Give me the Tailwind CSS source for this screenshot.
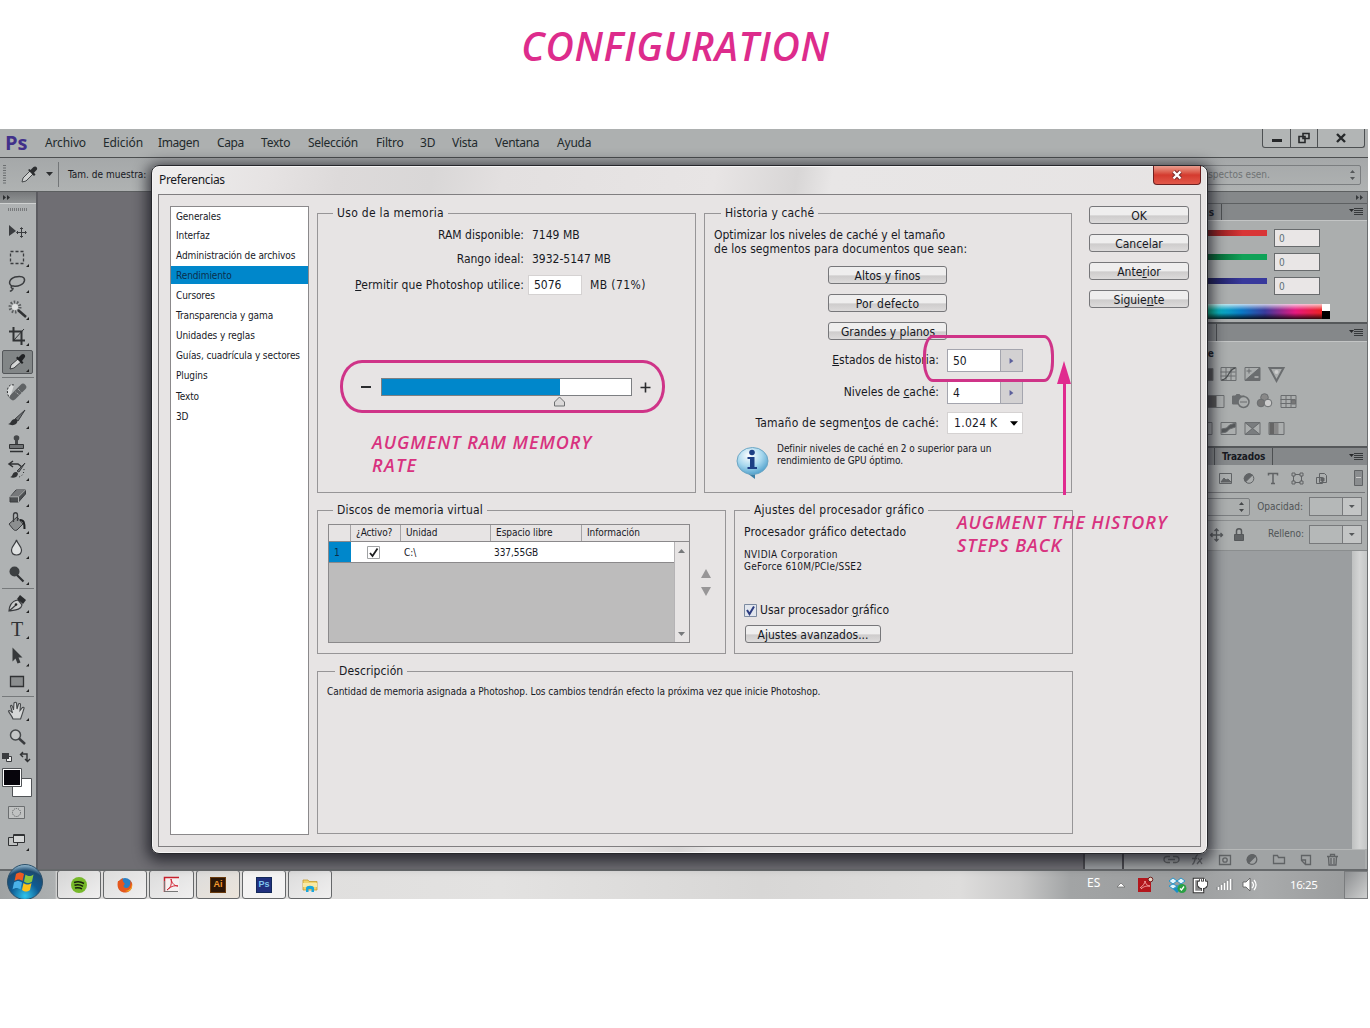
<!DOCTYPE html>
<html lang="es">
<head>
<meta charset="utf-8">
<title>Configuration</title>
<script src="https://cdn.jsdelivr.net/npm/@tailwindcss/browser@4"></script>
</head>
<body class="relative h-[1028px] w-[1370px] overflow-hidden bg-white font-['DejaVu_Sans_Condensed','DejaVu_Sans',sans-serif] text-[#17191f]">

<h1 class="flex h-[129px] w-[1351px] justify-center pt-[19px] font-['Open_Sans',sans-serif] text-[39px] leading-[54px] font-semibold tracking-[0.7px] text-[#dd2c8c] italic">CONFIGURATION</h1>

<!-- application window -->
<div class="flex h-[770px] w-[1368px] flex-col overflow-hidden bg-[#adb0b0]">
  <!-- menu bar -->
  <div class="flex h-[29px] shrink-0 justify-between border-b border-[#4c4f50] bg-[#adb0b0]">
    <nav class="flex items-center font-['Noto_Sans',sans-serif] text-[12px] text-[#222a2c]">
      <span class="w-[45px] pl-[5px] font-['Open_Sans',sans-serif] text-[20px] leading-none font-bold text-[#41308a]">Ps</span>
      <span class="w-[58px] tracking-[-0.15px]">Archivo</span><span class="w-[55px] tracking-[-0.1px]">Edición</span><span class="w-[59px] tracking-[-0.4px]">Imagen</span><span class="w-[44px] tracking-[-0.4px]">Capa</span><span class="w-[47px] tracking-[-0.2px]">Texto</span><span class="w-[68px] tracking-[-0.3px]">Selección</span><span class="w-[44px] tracking-[-0.2px]">Filtro</span><span class="w-[32px]">3D</span><span class="w-[43px] tracking-[-0.3px]">Vista</span><span class="w-[62px] tracking-[-0.3px]">Ventana</span><span class="tracking-[-0.2px]">Ayuda</span>
    </nav>
    <div class="mr-[3px] flex h-[19px] w-[103px] rounded-b-[3px] border border-t-0 border-[#4d5052] bg-[#b2b5b5]">
      <svg class="h-full w-full" viewBox="0 0 101 18"><path d="M27.500 0V18M54.500 0V18" stroke="#4d5052"/><path d="M9 11.500H19" stroke="#26282a" stroke-width="3"/><path d="M36 7.500h6v6h-6zM40 4.500h6v5h-6z" fill="none" stroke="#26282a" stroke-width="1.600"/><path d="M74 5l8 8M82 5l-8 8" stroke="#26282a" stroke-width="2.400"/></svg>
    </div>
  </div>
  <!-- options bar -->
  <div class="flex h-[34px] shrink-0 items-center justify-between border-b border-[#5c5f60] bg-gradient-to-b from-[#a5a8a9] to-[#afb2b2]">
    <div class="flex items-center">
      <svg class="h-8 w-[68px]" viewBox="0 0 68 32"><path d="M4.500 6V26" stroke="#6b6e70" stroke-width="3" stroke-dasharray="1 1.500"/><path d="M22 23l1-4 8-8 3 3-8 8z" fill="#d0d2d2" stroke="#45484a"/><path d="M28 11l6 6 1.500-1.500-1.500-1.800 3-3.200c1-2-1.500-4-3.500-2.500l-3 3-1-1z" fill="#2c2e30"/><path d="M46 13h7l-3.500 4z" fill="#2c2e30"/><path d="M58.500 3V28" stroke="#737678"/></svg>
      <span class="text-[10px]">Tam. de muestra:</span>
    </div>
    <div class="mr-[7px] flex h-[20px] w-[200px] items-center justify-between rounded-[2px] border border-[#7b7e80] pr-[3px] pl-[40px] text-[10px] text-[#6f7374]"><span>Aspectos esen.</span><svg class="h-3 w-[9px]" viewBox="0 0 9 12"><path d="M4.500 1L2 4h5zM4.500 11L2 8h5z" fill="#55585a"/></svg></div>
  </div>

  <!-- workspace -->
  <div class="flex h-[677px] shrink-0 bg-[#6f6e73]">
    <!-- tools -->
    <div class="flex w-[38px] shrink-0 flex-col border-r-2 border-[#5b5b60] bg-[#afb2b3]">
      <svg class="h-[26px] w-9 shrink-0" viewBox="0 0 36 26"><defs><linearGradient id="hd" x2="0" y2="1"><stop stop-color="#77797b"/><stop offset="1" stop-color="#909394"/></linearGradient></defs><path fill="url(#hd)" d="M0 0h36v11H0z"/><path d="M0 11.500h36" stroke="#d0d2d2"/><path d="M3 3l3 2.500-3 2.500zM7 3l3 2.500-3 2.500z" fill="#2c2e30"/><path d="M8 17.500h20" stroke="#77797b" stroke-width="3" stroke-dasharray="1 1"/></svg>
      <svg class="h-[26px] w-9 shrink-0" viewBox="0 0 36 26"><path d="M9 7v11l7-5z" fill="#3a3c3f"/><path d="M21.500 10v9M17 14.500h9M20 11l1.500-1.500 1.500 1.500M20 18l1.500 1.500 1.500-1.500M18 13l-1.500 1.500L18 16M25 13l1.500 1.500L25 16" fill="none" stroke="#3a3c3f"/></svg>
      <svg class="h-[26px] w-9 shrink-0" viewBox="0 0 36 26"><path d="M10.500 7.500h13v12h-13z" fill="none" stroke="#3a3c3f" stroke-width="1.300" stroke-dasharray="3 2"/><path d="M29 20v3h-3z" fill="#222"/></svg>
      <svg class="h-[26px] w-9 shrink-0" viewBox="0 0 36 26"><path d="M12 16c-4-2-3-7 3-9 6-1.500 10 0 9.500 3.500-.5 4-7 6.500-11 5.500-3-.5-3 2.500-.5 2.500 0 2-2 2-3 3" fill="none" stroke="#3a3c3f" stroke-width="1.500"/><path d="M29 20v3h-3z" fill="#222"/></svg>
      <svg class="h-[26px] w-9 shrink-0" viewBox="0 0 36 26"><circle cx="15" cy="11" r="5" fill="none" stroke="#5a5d5f" stroke-width="3" stroke-dasharray="1.500 1.600"/><circle cx="15" cy="11" r="3" fill="#e0e2e2"/><path d="M18 14l8 7" stroke="#303234" stroke-width="2.500"/><path d="M29 21v3h-3z" fill="#222"/></svg>
      <svg class="h-[26px] w-9 shrink-0" viewBox="0 0 36 26"><path d="M9 9.500h12.500V23M13.500 5v13.500H25" fill="none" stroke="#303234" stroke-width="2"/><path d="M14 18L24 7" stroke="#303234"/><path d="M29 21v3h-3z" fill="#222"/></svg>
      <svg class="h-[26px] w-9 shrink-0" viewBox="0 0 36 26"><rect x="2.500" y="2.500" width="30" height="23" rx="1.500" fill="#828687" stroke="#54575a"/><path d="M10 21l1-4 8-7 3 3-8 7z" fill="#d5d7d7" stroke="#3a3c3f"/><path d="M16 10l6 6 1.500-1.500L22 13l3-4c1-2-1.500-4-3.500-2.500l-3 3-1-1z" fill="#202224"/><path d="M29 21v3h-3z" fill="#222"/></svg>
      <div class="mx-0.5 mt-[3px] mb-px h-px shrink-0 bg-[#76797b]"></div>
      <svg class="h-[26px] w-9 shrink-0" viewBox="0 0 36 26"><path d="M14 6c-8-2-8 10-4 13" fill="#d9dbdb" stroke="#303234" stroke-dasharray="2 1.500"/><path d="M13 18L23 8" stroke="#5f6264" stroke-width="6.500" stroke-linecap="round"/><path d="M15.500 13l5 4M18 10l4 4" stroke="#babcbc" stroke-dasharray="1 1"/><path d="M29 21v3h-3z" fill="#222"/></svg>
      <svg class="h-[26px] w-9 shrink-0" viewBox="0 0 36 26"><path d="M25 5L15 14l3 2z" fill="#707375" stroke="#3a3c3f"/><path d="M8 19c3 0 3-5 7-5 3 0 3 3 1 5-2 1.500-5 1.500-8 0z" fill="#303234"/><path d="M29 21v3h-3z" fill="#222"/></svg>
      <svg class="h-[26px] w-9 shrink-0" viewBox="0 0 36 26"><circle cx="16.500" cy="7" r="2.800" fill="#45484a"/><path d="M15 9h3v5h-3z" fill="#45484a"/><path d="M9.500 13.500h14v4h-14z" fill="#707375" stroke="#303234"/><path d="M10 20.500h13" stroke="#303234" stroke-width="1.500"/><path d="M29 21v3h-3z" fill="#222"/></svg>
      <svg class="h-[26px] w-9 shrink-0" viewBox="0 0 36 26"><path d="M10 7h8l4 3M13 4L9 7l4 3" fill="none" stroke="#303234" stroke-width="1.500"/><path d="M25 6l-8 8 2 1z" fill="#707375" stroke="#3a3c3f"/><path d="M10 20c3 0 2-5 6-5 3 0 2 4 0 5-2 1-4 1-6 0z" fill="#303234"/><path d="M24 12c0 5-2 7-5 8" fill="none" stroke="#303234" stroke-dasharray="1 2"/><path d="M29 21v3h-3z" fill="#222"/></svg>
      <svg class="h-[26px] w-9 shrink-0" viewBox="0 0 36 26"><path d="M10 14l6-7h9.500v4l-7 8H10z" fill="#4c4f51" stroke="#3a3c3f"/><path d="M10.500 13.500h8l6-6.500h-8z" fill="#77797b"/><path d="M10 13.800h8.500l7-7M18.500 14v5" fill="none" stroke="#b0b2b2"/><path d="M29 21v3h-3z" fill="#222"/></svg>
      <svg class="h-[26px] w-9 shrink-0" viewBox="0 0 36 26"><path d="M9 15l8-7 6 7-6 6c-2 1-3 0-4-1z" fill="#8c8f90" stroke="#3a3c3f"/><path d="M13.500 13V6c0-3 4-3 4 0v6" fill="none" stroke="#3a3c3f" stroke-width="1.300"/><path d="M20 11c4 0 4.500 3 4.500 9" fill="none" stroke="#202224" stroke-width="2"/><path d="M29 22v3h-3z" fill="#222"/></svg>
      <svg class="h-[26px] w-9 shrink-0" viewBox="0 0 36 26"><path d="M16.500 5c1 4 5 6 5 10s-2.500 5-5 5-5-1-5-5 4-6 5-10z" fill="#dfe1e1" stroke="#3a3c3f" stroke-width="1.200"/><path d="M29 21v3h-3z" fill="#222"/></svg>
      <svg class="h-[26px] w-9 shrink-0" viewBox="0 0 36 26"><circle cx="14.500" cy="10.500" r="5" fill="#3c3f41"/><path d="M17 14l6.500 6.500" stroke="#303234" stroke-width="2.200"/><path d="M29 21v3h-3z" fill="#222"/></svg>
      <div class="mx-0.5 mt-px mb-px h-px shrink-0 bg-[#76797b]"></div>
      <svg class="h-[26px] w-9 shrink-0" viewBox="0 0 36 26"><path d="M9 21c0-4 2-10 9-11l4 5c-1 5-7 5-13 6zl7-6" fill="#c9cbcb" stroke="#3a3c3f" stroke-width="1.200"/><circle cx="16" cy="14.500" r="1.300" fill="#222"/><path d="M20 5l6 5-3 4-6-5z" fill="#2a2c2e"/><path d="M29 20v3h-3z" fill="#222"/></svg>
      <div class="flex h-[26px] shrink-0 items-center pl-[11px]"><span class="font-['Liberation_Serif',serif] text-[20px] leading-none text-[#2f3234]">T</span><svg class="h-[26px] w-3" viewBox="0 0 12 26"><path d="M6 20v3H3z" fill="#222"/></svg></div>
      <svg class="h-[27px] w-9 shrink-0" viewBox="0 0 36 26"><path d="M12.500 5v14l3-3 2 5 3-1-2-5h4z" fill="#36393b"/><path d="M29 21v3h-3z" fill="#222"/></svg>
      <svg class="h-[26px] w-9 shrink-0" viewBox="0 0 36 26"><path d="M10.500 7.500h13v10h-13z" fill="#8b8e8f" stroke="#303234" stroke-width="1.300"/><path d="M29 20v3h-3z" fill="#222"/></svg>
      <div class="mx-0.5 mt-px mb-px h-px shrink-0 bg-[#76797b]"></div>
      <svg class="h-[26px] w-9 shrink-0" viewBox="0 0 36 26"><path d="M13 21c-1-3-4-6-4.500-8 1-1 2.500 0 4 2L10.500 8c1-1.500 2-.5 3 4l.5-7c1-1 2-1 2.500 0l.5 6 1.500-5c1-1 2-.5 2 .5l-.5 6 2.500-3c1-.5 2 0 1.500 1-1 3-2.500 8-3.500 10.500z" fill="#d5d7d7" stroke="#45484a" stroke-width="1.100"/><path d="M29 20v3h-3z" fill="#222"/></svg>
      <svg class="h-[26px] w-9 shrink-0" viewBox="0 0 36 26"><circle cx="15.500" cy="11" r="5" fill="#c5c7c7" stroke="#45484a" stroke-width="1.500"/><path d="M19 14.500l6 5.500" stroke="#3a3c3f" stroke-width="2.500"/></svg>
      <svg class="h-[52px] w-9 shrink-0" viewBox="0 0 36 52"><path d="M6.500 6.500h5v5h-5z" fill="#eee" stroke="#3a3c3f"/><path d="M2 3h7v6H2z" fill="#3a3c3f"/><path d="M21 4h6v7M23 2l-2.500 2.500L23 7M25 9l2.500 2.500L30 9" fill="none" stroke="#303234" stroke-width="1.400"/><path d="M12.500 28.500h19v18h-19z" fill="#fff" stroke="#505356"/><path d="M2.500 18.500h19v18h-19z" fill="#fff" stroke="#505356"/><path d="M4 20h16v15H4z" fill="#07050c"/></svg>
      <svg class="h-[26px] w-9 shrink-0" viewBox="0 0 36 26"><path d="M8.500 4.500h16v12h-16z" fill="#c0c2c2" stroke="#6b6e70"/><circle cx="16.500" cy="10.500" r="4" fill="none" stroke="#505356" stroke-dasharray="1 1"/></svg>
      <svg class="h-[28px] w-9 shrink-0" viewBox="0 0 36 28"><path d="M8.500 9.500h9v8h-9z" fill="#c0c2c2" stroke="#303234"/><path d="M13.500 6.500h11v8h-11z" fill="#d5d7d7" stroke="#303234"/><path d="M13.500 7.500h11" stroke="#303234"/><path d="M29 20v3h-3z" fill="#222"/></svg>
    </div>

    <!-- panels -->
    <div class="ml-auto flex h-full w-[285px] border-l-2 border-[#4a4a4e] text-[10px]">
      <div class="w-[39px] border-r-2 border-[#4a4a4e] bg-[#9b9ea0]"></div>
      <div class="flex min-w-0 flex-1 flex-col border-r border-[#6b6e70] bg-[#abaeae]">
        <div class="h-[12px] shrink-0 border-b border-[#5d6062] bg-[#85888a]"><svg class="ml-auto h-[11px] w-[14px]" viewBox="0 0 14 11"><path d="M3 3l3 2.500L3 8zM7 3l3 2.500L7 8z" fill="#36393b"/></svg></div>
        <div class="flex h-[16px] shrink-0 items-center justify-between bg-[#85888a] pr-[3px]"><span class="flex h-full w-[98px] items-center justify-end border-r border-[#4d5052] pr-[7px] font-bold">Muestras</span><svg class="h-3 w-4" viewBox="0 0 16 12"><path d="M1 3h5L3.500 6z" fill="#26282a"/><path d="M6 2.500h9M6 4.500h9M6 6.500h9M6 8.500h9" stroke="#36393b"/></svg></div>
        <div class="flex h-[101px] shrink-0 flex-col border-t border-[#c3c5c5] pt-[8px]">
          <div class="flex h-6 pl-[21px]"><span class="mt-px h-[6px] w-[122px] bg-gradient-to-r from-black to-[#d93536] to-80%"></span><span class="ml-[7px] flex h-[18px] w-[46px] items-center border border-[#686b6d] bg-[#e9e6e6] pl-1 text-[#5c7077]">0</span></div>
          <div class="flex h-6 pl-[21px]"><span class="mt-px h-[6px] w-[122px] bg-gradient-to-r from-black to-[#0fa258] to-80%"></span><span class="ml-[7px] flex h-[18px] w-[46px] items-center border border-[#686b6d] bg-[#e9e6e6] pl-1 text-[#5c7077]">0</span></div>
          <div class="flex h-[27px] pl-[21px]"><span class="mt-px h-[6px] w-[122px] bg-gradient-to-r from-black to-[#38399c] to-80%"></span><span class="ml-[7px] flex h-[18px] w-[46px] items-center border border-[#686b6d] bg-[#e9e6e6] pl-1 text-[#5c7077]">0</span></div>
          <svg class="ml-5 h-[16px] w-[186px]" viewBox="0 0 186 16" preserveAspectRatio="none"><defs><linearGradient id="sp"><stop stop-color="#e33"/><stop offset=".15" stop-color="#ee3"/><stop offset=".3" stop-color="#0b5"/><stop offset=".42" stop-color="#09b3c4"/><stop offset=".55" stop-color="#0a78c5"/><stop offset=".68" stop-color="#3a3a9c"/><stop offset=".85" stop-color="#e6197f"/><stop offset="1" stop-color="#e22"/></linearGradient><linearGradient id="sv" x2="0" y2="1"><stop stop-color="#fff" stop-opacity=".75"/><stop offset=".4" stop-color="#fff" stop-opacity="0"/><stop offset=".6" stop-opacity="0"/><stop offset="1" stop-opacity=".8"/></linearGradient></defs><path fill="url(#sp)" d="M0 0h178v15H0z"/><path fill="url(#sv)" d="M0 0h178v15H0z"/><path fill="#fff" d="M178 0h8v8h-8z"/><path d="M178 7h8v8h-8z"/></svg>
        </div>
        <div class="mt-px flex h-[19px] shrink-0 items-center justify-between border-t-2 border-[#55585a] bg-[#85888a] pr-[3px]"><span class="h-full w-[93px] border-r border-[#4d5052]"></span><svg class="h-3 w-4" viewBox="0 0 16 12"><path d="M1 3h5L3.500 6z" fill="#26282a"/><path d="M6 2.500h9M6 4.500h9M6 6.500h9M6 8.500h9" stroke="#36393b"/></svg></div>
        <div class="h-[105px] shrink-0 border-t border-[#c3c5c5] pt-[4px]">
          <div class="flex h-[14px] items-center pl-[6px] font-bold">Añadir un ajuste</div>
          <svg class="h-[82px] w-[243px] pl-px" viewBox="0 0 241 82" fill="none" stroke="#6a6d6f"><path d="M78.500 8.500h9v12h-9z" fill="#555"/><path d="M95.500 7.500h15v13h-15zM95 12h15M95 16h15M100.500 8v12M105.500 8v12"/><path d="M96 20c8 0 6-11 14-12" stroke="#4d5052" stroke-width="1.300"/><path d="M119.500 7.500h15v13h-15z"/><path d="M134 8v12h-14z" fill="#6a6d6f"/><path d="M121 11h5M123.500 8.500v5"/><path d="M129 17h4" stroke="#ddd"/><path d="M144 8h14l-7 13z" stroke-width="2"/><circle cx="151" cy="12" r="2" fill="#ccc" stroke="none"/><path d="M74.500 35.500h24v12h-24z"/><path d="M74 36h17v11H74z" fill="#555" stroke="none"/><path d="M107 36h3l1-1.500h3l1 1.500h4v8h-12z" fill="#6a6d6f"/><circle cx="118" cy="42" r="5.500" fill="#abaeae" stroke-width="1.500"/><path d="M114.500 42h7"/><circle cx="139" cy="37.500" r="3.800" fill="#888"/><circle cx="135.500" cy="43" r="3.800" fill="#777"/><circle cx="142.500" cy="43" r="3.800" fill="#ccc"/><path d="M155.500 35.500h15v12h-15zM155 39.500h15M155 43.500h15M160.500 36v12M165.500 36v12"/><path d="M166 40h4v4h-4z" fill="#777"/><path d="M74.500 62.500h12v12h-12zM95.500 62.500h15v12h-15z"/><path d="M96 69l5-1 3-3 6-2v4l-6 2-3 3-5 1z" fill="#55585a"/><path d="M119.500 62.500h15v12h-15z"/><path d="M120 63h14l-7 6zM120 74h14l-7-6z" fill="#7a7d7f" stroke="none"/><path d="M119.500 62.500l15 12M134.500 62.500l-15 12"/><path d="M143.500 62.500h15v12h-15z"/><path d="M144 63h5v11h-5z" fill="#666" stroke="none"/><path d="M149 63h4v11h-4z" fill="#888" stroke="none"/></svg>
        </div>
        <div class="flex h-[19px] shrink-0 items-center justify-between border-t-2 border-[#55585a] bg-[#85888a] pr-[3px]"><div class="flex h-full items-center"><span class="h-full w-[91px] border-r border-[#4d5052]"></span><span class="flex h-full w-[58px] items-center justify-center border-r border-[#4d5052] font-bold tracking-[-0.2px]">Trazados</span></div><svg class="h-3 w-4" viewBox="0 0 16 12"><path d="M1 3h5L3.500 6z" fill="#26282a"/><path d="M6 2.500h9M6 4.500h9M6 6.500h9M6 8.500h9" stroke="#36393b"/></svg></div>
        <svg class="h-[28px] w-[241px] shrink-0 border-b border-[#77797b]" viewBox="0 0 241 27" fill="none" stroke="#606365"><path d="M95.500 8.500h12v10h-12z"/><path d="M97 17l3-4 2 2 2-1 3 3z" fill="#606365"/><circle cx="125" cy="13.500" r="4.800"/><path d="M121.500 17a5 5 0 0 1 7-7z" fill="#606365"/><path d="M144.500 10.500v-2h9v2M149 8.500v10M147 18.500h4" stroke-width="1.500"/><path d="M169.500 9.500h8v8h-8z"/><path d="M168 8h3v3h-3zM176 8h3v3h-3zM168 16h3v3h-3zM176 16h3v3h-3z" fill="#abaeae"/><path d="M192.500 12.500h6v6h-6zM195.500 8.500h5l2 2v7h-7z"/><path d="M197 13h3v3h-3z" fill="#606365"/><path d="M230.500 5.500h8v15h-8z" fill="#8a8d8f"/><path d="M232 12.500h5" stroke="#ccc"/></svg>
        <div class="flex h-[28px] shrink-0 items-center justify-end border-b border-[#8b8e8f] pr-[5px] text-[#505456]"><span class="mr-[7px] flex h-[18px] w-[70px] items-center justify-end rounded-[2px] border border-[#7b7e80] pr-[3px]"><svg class="h-3 w-[9px]" viewBox="0 0 9 12"><path d="M4.500 1L2 4h5zM4.500 11L2 8h5z" fill="#45484a"/></svg></span><span class="mr-1.5">Opacidad:</span><span class="flex h-[19px] w-[53px] border border-[#77797b]"><span class="w-[34px] border-r border-[#77797b] bg-[#b5b8b8]"></span><svg class="h-full w-[18px] bg-[#c3c5c5]" viewBox="0 0 18 17"><path d="M6 7h6l-3 3z" fill="#55585a"/></svg></span></div>
        <div class="flex h-[30px] shrink-0 items-start justify-end border-b border-[#8b8e8f] pt-[4px] pr-[5px] leading-[18px] text-[#505456]"><svg class="mt-[2px] mr-[18px] h-4 w-[42px]" viewBox="0 0 42 16" fill="none" stroke="#55585a"><path d="M8.500 2v12M2.500 8h12M6.500 4l2-2 2 2M6.500 12l2 2 2-2M4.500 6l-2 2 2 2M12.500 6l2 2-2 2" stroke-width="1.300"/><path d="M26.500 7.500h9v6h-9z" fill="#606365"/><path d="M28.500 7V4c0-3 5-3 5 0v3" stroke-width="1.500"/></svg><span class="mr-[5px]">Relleno:</span><span class="flex h-[19px] w-[53px] border border-[#77797b]"><span class="w-[34px] border-r border-[#77797b] bg-[#b5b8b8]"></span><svg class="h-full w-[18px] bg-[#c3c5c5]" viewBox="0 0 18 17"><path d="M6 7h6l-3 3z" fill="#55585a"/></svg></span></div>
        <div class="flex min-h-0 flex-1 justify-end bg-[#9b9ea0]"><div class="w-[15px] bg-gradient-to-r from-[#bfc1c1] via-[#d4d5d5] to-[#c4c6c6]"></div></div>
        <svg class="h-[20px] w-[241px] shrink-0 border-t border-[#b6b8b8] bg-[#a0a3a4]" viewBox="0 0 241 19" fill="none" stroke="#606365" stroke-width="1.300"><path d="M46 6.500h-3a3 3 0 0 0 0 6h3M49 6.500h3a3 3 0 0 1 0 6h-3M44 9.500h7"/><path d="M68 14c3 1 3-10 6-9M68 8.500h5M74 8l4 6M78 8l-5 6"/><path d="M95.500 5.500h11v9h-11z"/><circle cx="101" cy="10" r="2.200"/><circle cx="128" cy="9.500" r="4.800"/><path d="M124.500 13a5 5 0 0 1 7-7z" fill="#606365"/><path d="M149.500 13.500v-8h4l1 2h6v6z"/><path d="M177.500 5.500h9v9h-5l-4-4zM181.500 14v-4h-4"/><path d="M203 6.500h11M206.500 6V4.500h4V6M204.500 7l.5 8h7l.5-8M207 8v6M210 8v6"/></svg>
      </div>
    </div>
  </div>

  <!-- taskbar -->
  <div class="flex h-[30px] flex-1 justify-between border-t-2 border-[#66696b] bg-[linear-gradient(90deg,#9fa2a3_0,#adb0b1_55px,#dcdbda_57px,#e3e2e1_500px,#d8d7d6_760px,#dedddc_960px,#c8c8c8_1020px,#a2a4a5_1070px,#9b9d9e_1180px,#a9abac_1260px,#9b9d9e_1340px)]">
    <div class="-mt-px flex gap-[2px] pl-[57px]">
      <div class="flex w-11 items-center justify-center rounded-[3px] border border-[#66686a] bg-gradient-to-br from-[#d5d5d5] to-[#f0efef]"><svg class="size-4" viewBox="0 0 16 16"><circle cx="8" cy="8" r="8" fill="#76b82a"/><path d="M3 5.500c4-1.200 7-.8 10 1M3.500 8.300c3-1 6-.5 8.500 1M4 11c3-.7 5-.4 7 .8" stroke="#17210d" stroke-width="1.500" fill="none"/></svg></div>
      <div class="flex w-11 items-center justify-center rounded-[3px] border border-[#66686a] bg-gradient-to-br from-[#dcdcdc] to-[#f0efef]"><svg class="size-4" viewBox="0 0 16 16"><circle cx="8" cy="8" r="7" fill="#2b7fc4"/><path d="M1 4c-2 8 3 12 8 11.500 4-.5 7-4 6-9.500l-2-3c1 5-1 8-4 8-3 0-3-3-1-4C6 5 5 3 6 1 3 2 3 4 1 4z" fill="#e4571e"/><path d="M15 6c0 5-3 8-7 8 5 2 8-3 7-8z" fill="#f6b51d"/></svg></div>
      <div class="flex w-[45px] items-center justify-center rounded-[3px] border border-[#66686a] bg-gradient-to-br from-[#dcdcdc] to-[#f0efef]"><svg class="size-[17px]" viewBox="0 0 17 17"><path d="M1 1h15v15H1z" fill="#f5f0f0"/><path d="M1.500 16V1.500H16" stroke="#c6202c" stroke-width="1.500" fill="none"/><path d="M1.500 5v10.500H15" stroke="#777" fill="none"/><path d="M8 3c1 5 4 7 7 7-4-1-8 1-11 4 4-2 5-7 4-11z" stroke="#d22333" fill="none"/></svg></div>
      <div class="flex w-11 items-center justify-center rounded-[3px] border border-[#66686a] bg-gradient-to-br from-[#dcdcdc] to-[#ece4da]"><span class="flex size-4 items-center justify-center border border-[#6a3a0c] bg-[#2d1606] font-['Liberation_Sans',sans-serif] text-[9px] font-bold text-[#f29a2e]">Ai</span></div>
      <div class="flex w-11 items-center justify-center rounded-[3px] border border-[#66686a] bg-[#f4f3f3]"><span class="flex size-4 items-center justify-center border border-[#14295a] bg-[#21307e] font-['Liberation_Sans',sans-serif] text-[9px] font-bold text-[#7fc4ef]">Ps</span></div>
      <div class="flex w-11 items-center justify-center rounded-[3px] border border-[#66686a] bg-gradient-to-br from-[#dcdcdc] to-[#f0efef]"><svg class="size-4" viewBox="0 0 16 16"><path d="M1 3h5l1 1.500h8V13H1z" fill="#f0d36b" stroke="#c59b2b" stroke-width=".8"/><path d="M1 6h14v4H1z" fill="#f8e9a4"/><path d="M4 15v-4c0-3 8-3 8 0v4h-2.500v-3h-3v3z" fill="#19a7dc"/></svg></div>
    </div>
    <div class="flex font-['Noto_Sans',sans-serif] text-[12px] leading-[28px] text-white">
      <span class="w-[26px] leading-[23px]">ES</span>
      <svg class="h-[29px] w-[177px]" viewBox="0 0 177 29"><path d="M4 16h8l-4-4z" fill="#fff" stroke="#666" stroke-width=".7"/><path d="M25 7h13v14H25z" fill="#b3161c"/><path d="M27 17c3-2 5-5 5-7 1 4 3 5 5 5-3 0-6 0-9 3" stroke="#f4a7a7" fill="none"/><circle cx="37.500" cy="8.500" r="2.300" fill="#e9d3c3" stroke="#702020"/><path d="M60 7l4 3-4 3-4-3zM68 7l4 3-4 3-4-3zM60 13l4 2-4 3-4-3zM68 13l4 2-4 3-4-3z" fill="#e5f5fc" stroke="#1790c8" stroke-width=".9"/><path d="M60 18l4-2 4 2-4 4z" fill="#1790c8"/><circle cx="69" cy="17.500" r="4.500" fill="#2aa043"/><path d="M67 17.500l1.500 1.500 2.500-3.500" stroke="#fff" fill="none" stroke-width="1.300"/><path d="M81.500 8.500h8v12h-8z" fill="#888" stroke="#333" stroke-width="3.500"/><path d="M81.500 8.500h8v12h-8z" fill="#888" stroke="#fff" stroke-width="1.500"/><path d="M85.500 11h8v3c0 3.500-8 3.500-8 0zM87.500 8v3M91.500 8v3M89.500 16v4" fill="#fff" stroke="#333" stroke-width="2.500"/><path d="M85.500 11h8v3c0 3.500-8 3.500-8 0zM87.500 8v3M91.500 8v3M89.500 16v4" fill="#fff" stroke="#fff"/><path d="M105.500 19v-3M108.500 19v-5M111.500 19v-7M114.500 19V10M117.500 19V8" stroke="#5a5d5f" stroke-width="3.500"/><path d="M105.500 19v-3M108.500 19v-5M111.500 19v-7M114.500 19V10M117.500 19V8" stroke="#fff" stroke-width="2"/><path d="M130 11h3l4-4v13l-4-4h-3z" fill="#fff" stroke="#555" stroke-width=".8"/><path d="M139 11c2 2 2 4 0 6M141 9c2.500 3 2.500 7 0 10" stroke="#fff" fill="none" stroke-width="1.200"/></svg>
      <span class="w-[54px] text-[11.500px] tracking-[-0.4px]">16:25</span>
      <span class="w-[24px] border border-[#7a7c7e] bg-gradient-to-br from-[#8d8f91] to-[#cfd0d0]"></span>
    </div>
  </div>
</div>

<!-- start orb overlaps the taskbar edge -->
<svg class="absolute top-[863px] left-[6px] h-[36px] w-[38px]" viewBox="0 0 38 36"><defs><radialGradient id="ob" cx=".5" cy=".9" r=".9"><stop stop-color="#2ec4ec"/><stop offset=".45" stop-color="#0f5b93"/><stop offset=".8" stop-color="#1c4a70"/><stop offset="1" stop-color="#9fc3d8"/></radialGradient></defs><circle cx="19" cy="19" r="17.500" fill="url(#ob)" stroke="#2b4f69"/><path d="M10 11c3-2 5-2 8 0l-1.500 7c-3-2-5-2-8 0z" fill="#ee5a22"/><path d="M19.500 11.500c3 2 5 2 8 0l-1.500 7c-3 2-5 2-8 0z" fill="#8cc63e"/><path d="M8 19.500c3-2 5-2 8 0l-1.500 7c-3-2-5-2-8 0z" fill="#4ab1e8"/><path d="M17.500 20c3 2 5 2 8 0l-1.500 7c-3 2-5 2-8 0z" fill="#fcc21b"/></svg>

<!-- preferences dialog -->
<div class="absolute top-[165px] left-[151px] flex h-[689px] w-[1057px] flex-col rounded-[8px] border border-[#26272b] bg-[linear-gradient(100deg,#efeeee_0,#e6e3e3_10%,#dddada_16%,#d9d7d7_24%,#e3e0e0_30%,#e8e5e5_48%,#d8d6d6_55%,#e8e6e6_58%,#e6e3e3_100%)] px-[6px] pb-[6px] shadow-[0_3px_14px_4px_rgba(20,20,28,0.75),inset_0_0_0_1px_#f6f5f5]">
  <div class="flex h-[28px] shrink-0 justify-between">
    <span class="pl-px font-['Noto_Sans',sans-serif] text-[12px] leading-[28px] tracking-[-0.35px]">Preferencias</span>
    <div class="flex h-[19px] w-[48px] items-center justify-center rounded-b-[4px] border border-t-0 border-[#6d2020] bg-gradient-to-b from-[#e89c8e] via-[#d43a2e] via-50% to-[#e2584a]"><svg class="h-3 w-4" viewBox="0 0 16 12"><path d="M4.500 2.500l7 7M11.500 2.500l-7 7" stroke="#7d3030" stroke-width="4.500"/><path d="M4.500 2.500l7 7M11.500 2.500l-7 7" stroke="#fff" stroke-width="2.400"/></svg></div>
  </div>
  <div class="flex min-h-0 flex-1 border border-[#807e80] bg-[#e7e4e4] pt-[10px] pl-[11px] text-[12px]">
    <!-- sections -->
    <ul class="mt-[1px] mr-2 h-[629px] w-[139px] shrink-0 border border-[#8b898b] bg-white text-[10px] tracking-[-0.1px]">
      <li class="flex h-[18px] items-center pl-[5px]">Generales</li>
      <li class="flex h-[20px] items-center pl-[5px]">Interfaz</li>
      <li class="flex h-[20px] items-center pl-[5px]">Administración de archivos</li>
      <li class="my-px flex h-[18px] items-center bg-[#0087cb] pl-[5px] text-[#0b2f4c]">Rendimiento</li>
      <li class="flex h-[20px] items-center pl-[5px]">Cursores</li>
      <li class="flex h-[20px] items-center pl-[5px]">Transparencia y gama</li>
      <li class="flex h-[20px] items-center pl-[5px]">Unidades y reglas</li>
      <li class="flex h-[20px] items-center pl-[5px]">Guías, cuadrícula y sectores</li>
      <li class="flex h-[21px] items-center pl-[5px]">Plugins</li>
      <li class="flex h-[20px] items-center pl-[5px]">Texto</li>
      <li class="flex h-[20px] items-center pl-[5px]">3D</li>
    </ul>

    <div class="flex w-[756px] shrink-0 flex-col gap-[9px]">
      <div class="flex h-[288px] gap-[8px]">
        <fieldset class="w-[379px] border border-[#979597]">
          <legend class="ml-[15px] h-4 px-1 leading-4 tracking-[0.3px]">Uso de la memoria</legend>
          <div class="flex h-[27px] items-center gap-2"><span class="w-[206px] text-right">RAM disponible:</span><span>7149 MB</span></div>
          <div class="flex h-[22px] items-center gap-2"><span class="w-[206px] text-right">Rango ideal:</span><span>3932-5147 MB</span></div>
          <div class="flex h-[30px] items-center"><span class="w-[206px] text-right tracking-[0.1px]"><u>P</u>ermitir que Photoshop utilice:</span><span class="ml-1 flex h-[20px] w-[54px] items-center border border-[#d5d2d2] bg-white pl-[5px]">5076</span><span class="ml-2 tracking-[0.4px]">MB (71%)</span></div>
          <div class="mt-[78px] flex h-[18px] items-center pl-[43px]">
            <span class="h-[2px] w-[10px] bg-[#2b2c2e]"></span>
            <div class="relative ml-[10px] h-[18px] w-[251px] border border-[#7d7f82] bg-white"><div class="h-full bg-[#0087cb]" style="width:71.500%"></div><svg class="absolute top-[17px] left-[171px] h-[11px] w-[13px]" viewBox="0 0 13 11"><path d="M6.500 1L11.500 6v4h-10V6z" fill="#dbd9d9" stroke="#6d6f70"/></svg></div>
            <svg class="ml-2 size-[11px]" viewBox="0 0 11 11"><path d="M5.500 .5v10M.5 5.500h10" stroke="#2b2c2e" stroke-width="1.600"/></svg>
          </div>
        </fieldset>
        <fieldset class="w-[368px] border border-[#979597]">
          <legend class="ml-4 h-4 px-1 leading-4 tracking-[0.15px]">Historia y caché</legend>
          <p class="mt-[7px] pl-[9px] leading-[14px] whitespace-nowrap"><span class="tracking-[-0.05px]">Optimizar los niveles de caché y el tamaño</span><br><span class="tracking-[0.08px]">de los segmentos para documentos que sean:</span></p>
          <div class="mt-[10px] ml-[123px] flex w-[119px] flex-col gap-[10px] text-center">
            <span class="h-[18px] rounded-[3px] border border-[#77777a] bg-gradient-to-b from-[#efeeee] from-50% via-[#cecccc] via-55% to-[#dddbdb] leading-[18px]">Altos y finos</span>
            <span class="h-[18px] rounded-[3px] border border-[#77777a] bg-gradient-to-b from-[#efeeee] from-50% via-[#cecccc] via-55% to-[#dddbdb] leading-[18px] tracking-[0.2px]">Por defecto</span>
            <span class="h-[18px] rounded-[3px] border border-[#77777a] bg-gradient-to-b from-[#efeeee] from-50% via-[#cecccc] via-55% to-[#dddbdb] pl-px leading-[18px]">Grandes y planos</span>
          </div>
          <div class="mt-[9px] flex h-[23px] items-center"><span class="-mt-[2px] w-[234px] text-right"><u>E</u>stados de historia:</span><span class="ml-2 flex h-full w-[76px] border border-[#a4a5ae] bg-white"><span class="w-[52px] pl-[5px] leading-[22px]">50</span><svg class="h-full w-[22px] border-l border-[#a4a5ae] bg-[#d3d1d2]" viewBox="0 0 22 21"><path d="M9 8l4 3-4 3z" fill="#5b5f9b"/></svg></span></div>
          <div class="mt-[9px] flex h-[23px] items-center"><span class="-mt-[2px] w-[234px] text-right">Niveles de <u>c</u>aché:</span><span class="ml-2 flex h-full w-[76px] border border-[#a4a5ae] bg-white"><span class="w-[52px] pl-[5px] leading-[22px]">4</span><svg class="h-full w-[22px] border-l border-[#a4a5ae] bg-[#d3d1d2]" viewBox="0 0 22 21"><path d="M9 8l4 3-4 3z" fill="#5b5f9b"/></svg></span></div>
          <div class="mt-[8px] flex h-[22px] items-center"><span class="w-[234px] text-right tracking-[0.2px]">Tamaño de segmen<u>t</u>os de caché:</span><span class="ml-2 flex h-full w-[76px] items-center justify-between border border-[#d5d2d2] bg-white pr-[4px] pl-[6px]"><span class="tracking-[0.3px]">1.024 K</span><svg class="h-[5px] w-[8px]" viewBox="0 0 9 5"><path d="M0 0h9L4.500 5z"/></svg></span></div>
          <div class="mt-[9px] flex pl-[31px]">
            <svg class="mt-[4px] h-[34px] w-[33px]" viewBox="0 0 33 34"><defs><radialGradient id="inf" cx=".4" cy=".3" r=".8"><stop stop-color="#fff"/><stop offset=".5" stop-color="#a8d8ee"/><stop offset="1" stop-color="#3b93c4"/></radialGradient></defs><path d="M11 26l8 6v-7z" fill="#3b7fa6"/><ellipse cx="16.500" cy="14" rx="15.500" ry="13.500" fill="url(#inf)" stroke="#6da6c4"/><circle cx="16" cy="5.500" r="2.800" fill="#1d3f85"/><path d="M11.500 10h7v10h2.500v2h-9.500v-2h2.500v-8h-2.500z" fill="#1d3f85"/></svg>
            <p class="ml-[8px] text-[10px] leading-[12px] tracking-[-0.05px]">Definir niveles de caché en 2 o superior para un<br>rendimiento de GPU óptimo.</p>
          </div>
        </fieldset>
      </div>

      <div class="flex h-[152px] justify-between">
        <fieldset class="w-[409px] border border-[#979597]">
          <legend class="ml-[15px] h-4 px-1 leading-4 tracking-[0.17px]">Discos de memoria virtual</legend>
          <div class="flex pt-[6px] pl-[10px]">
            <div class="h-[119px] w-[362px] border border-[#8b898b] bg-[#bdbcbc] text-[10px] tracking-[-0.05px]">
              <div class="flex h-[17px] items-center border-b border-[#8b898b] bg-[#e7e4e4]"><span class="h-full w-[22px] border-r border-[#a5a3a5]"></span><span class="h-full w-[50px] border-r border-[#a5a3a5] pl-[5px] leading-4 tracking-[-0.15px]">¿Activo?</span><span class="h-full w-[90px] border-r border-[#a5a3a5] pl-[5px] leading-4">Unidad</span><span class="h-full w-[91px] border-r border-[#a5a3a5] pl-[5px] leading-4">Espacio libre</span><span class="pl-[5px] leading-4">Información</span></div>
              <div class="flex h-[100px]">
                <div class="flex h-[21px] w-[345px] items-center border-b border-[#8b898b] bg-white"><span class="h-full w-[22px] bg-[#0087cb] pl-[5px] leading-[21px] text-[#0b2f4c]">1</span><span class="flex w-[53px] justify-center pr-[8px]"><svg class="size-[13px]" viewBox="0 0 13 13"><path d="M.5.5h12v12H.5z" fill="#fff" stroke="#a0a2a4"/><path d="M3 7l2.500 3L10.500 2.500" fill="none" stroke="#1d1e20" stroke-width="1.800"/></svg></span><span class="w-[90px]">C:\</span><span>337,55GB</span></div>
                <svg class="h-full w-[15px] border-l border-[#b5b3b5] bg-[#e7e4e4]" viewBox="0 0 14 100"><path d="M3 11h7L6.500 7zM3 90h7l-3.500 4z" fill="#77797b"/></svg>
              </div>
            </div>
            <svg class="mt-[42px] ml-[10px] h-[32px] w-[12px]" viewBox="0 0 12 32"><path d="M1 12h10L6 3zM1 21h10l-5 9z" fill="#989697"/></svg>
          </div>
        </fieldset>
        <fieldset class="w-[339px] border border-[#979597]">
          <legend class="ml-[15px] h-4 px-1 leading-4 tracking-[0.22px]">Ajustes del procesador gráfico</legend>
          <div class="flex flex-col pl-[9px]">
            <span class="mt-[6px] leading-4 tracking-[0.13px]">Procesador gráfico detectado</span>
            <p class="mt-[9px] text-[10px] leading-[12px]"><span class="tracking-[0.37px]">NVIDIA Corporation</span><br><span class="tracking-[0.22px]">GeForce 610M/PCIe/SSE2</span></p>
            <span class="mt-[29px] flex h-4 items-center gap-[3px]"><svg class="size-[13px]" viewBox="0 0 13 13"><path d="M.5.5h12v12H.5z" fill="#e2e6ee" stroke="#7c8aa0"/><path d="M3 6l2.500 4L10 2.500" fill="none" stroke="#2c3c80" stroke-width="2"/></svg><span>Usar procesador <u>g</u>ráfico</span></span>
            <span class="mt-[7px] ml-px h-[18px] w-[136px] rounded-[3px] border border-[#77777a] bg-gradient-to-b from-[#efeeee] from-50% via-[#cecccc] via-55% to-[#dddbdb] text-center leading-[18px]">Ajustes avanzados...</span>
          </div>
        </fieldset>
      </div>

      <fieldset class="h-[171px] border border-[#979597]">
        <legend class="ml-[17px] h-4 px-1 leading-4 tracking-[0.1px]">Descripción</legend>
        <p class="mt-[6px] ml-[9px] text-[10px] leading-[14px] tracking-[-0.048px]">Cantidad de memoria asignada a Photoshop. Los cambios tendrán efecto la próxima vez que inicie Photoshop.</p>
      </fieldset>
    </div>

    <div class="mt-px ml-4 flex w-[100px] shrink-0 flex-col gap-[10px] text-center">
      <span class="h-[18px] rounded-[3px] border border-[#77777a] bg-gradient-to-b from-[#efeeee] from-50% via-[#cecccc] via-55% to-[#dddbdb] leading-[18px]">OK</span>
      <span class="h-[18px] rounded-[3px] border border-[#77777a] bg-gradient-to-b from-[#efeeee] from-50% via-[#cecccc] via-55% to-[#dddbdb] leading-[18px]">Cancelar</span>
      <span class="h-[18px] rounded-[3px] border border-[#77777a] bg-gradient-to-b from-[#efeeee] from-50% via-[#cecccc] via-55% to-[#dddbdb] leading-[18px]">Ante<u>r</u>ior</span>
      <span class="h-[18px] rounded-[3px] border border-[#77777a] bg-gradient-to-b from-[#efeeee] from-50% via-[#cecccc] via-55% to-[#dddbdb] leading-[18px]">Siguie<u>n</u>te</span>
    </div>
  </div>
</div>

<!-- annotations -->
<div class="absolute top-[360px] left-[340px] h-[53px] w-[325px] rounded-[22px/26px] border-3 border-[#cf3488]"></div>
<div class="absolute top-[335px] left-[923px] h-[47px] w-[131px] rounded-[10px/20px] border-3 border-[#cf3488]"></div>
<svg class="absolute top-[361px] left-[1057px] h-[135px] w-[14px]" viewBox="0 0 14 135"><path d="M7 0l7 23H0z" fill="#e02b8f"/><path d="M7.500 20V134" stroke="#e02b8f" stroke-width="3"/></svg>
<p class="absolute top-[431px] left-[372px] font-['Open_Sans',sans-serif] text-[18px] leading-[23px] font-semibold tracking-[0.97px] whitespace-nowrap text-[#d8327f] italic">AUGMENT RAM MEMORY<br><span class="tracking-[1.3px]">RATE</span></p>
<p class="absolute top-[511px] left-[957px] font-['Open_Sans',sans-serif] text-[18px] leading-[23px] font-semibold tracking-[0.92px] whitespace-nowrap text-[#d8327f] italic">AUGMENT THE HISTORY<br>STEPS BACK</p>
</body>
</html>
